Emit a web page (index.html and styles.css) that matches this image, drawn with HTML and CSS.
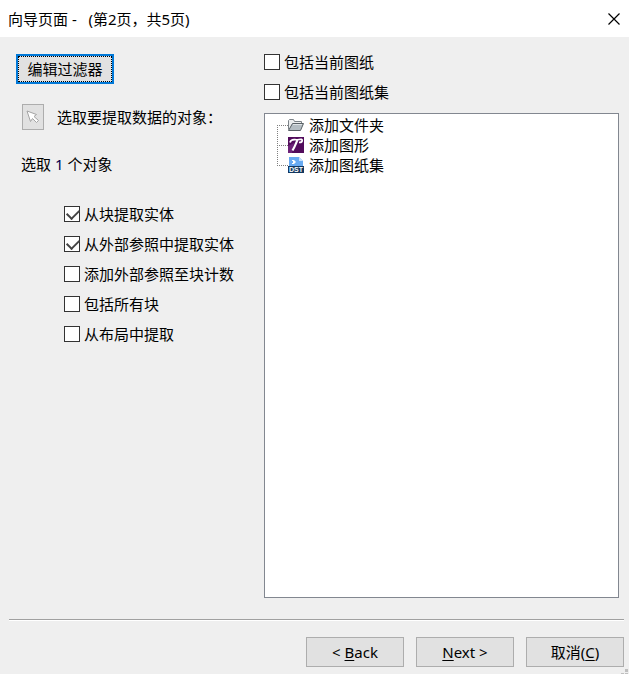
FILE: index.html
```html
<!DOCTYPE html>
<html lang="zh-CN">
<head>
    <meta charset="UTF-8">
    <meta name="viewport" content="width=device-width, initial-scale=1.0">
    <title>向导页面</title>
    <link rel="stylesheet" href="styles.css">
</head>
<body>
    <header class="titlebar">
        <h1>向导页面 -&nbsp;&nbsp; (第2页，共5页)</h1>
        <button class="close" type="button" aria-label="关闭">
            <svg width="12" height="12" viewBox="0 0 12 12"><path d="M0.5 0.5L11.5 11.5M11.5 0.5L0.5 11.5" stroke="#000" stroke-width="1.2" fill="none"/></svg>
        </button>
    </header>

    <main class="content">
        <section class="left">
            <button class="btn filter" type="button">编辑过滤器</button>
            <div class="pick">
                <button class="pick-btn" type="button" id="pick" aria-label="选取对象">
                    <svg width="14" height="14" viewBox="0 0 14 14"><path d="M1 1L10.5 4.5L8 6.5L12.5 10.5L10.5 12.5L6.5 8.5L4.5 11.5Z" fill="#fff" stroke="#a3a3a3"/></svg>
                </button>
                <label for="pick">选取要提取数据的对象：</label>
            </div>
            <p class="count">选取 <span class="number">1</span> 个对象</p>
            <div class="options">
                <label class="check"><input type="checkbox" checked>从块提取实体</label>
                <label class="check"><input type="checkbox" checked>从外部参照中提取实体</label>
                <label class="check"><input type="checkbox">添加外部参照至块计数</label>
                <label class="check"><input type="checkbox">包括所有块</label>
                <label class="check"><input type="checkbox">从布局中提取</label>
            </div>
        </section>

        <section class="right">
            <label class="check"><input type="checkbox">包括当前图纸</label>
            <label class="check"><input type="checkbox">包括当前图纸集</label>
            <ul class="tree">
                <li>
                    <svg width="16" height="16" viewBox="0 0 16 16">
                        <path d="M0.5 12.5V3.5L1.5 2.5H5.5L6.5 4.5H13.5V6.5" fill="#eceeef" stroke="#7c8388"/>
                        <path d="M0.5 13.5L4.5 6.5H15.5L12.5 13.5Z" fill="#b5bec4" stroke="#596166"/>
                        <path d="M5 7.5H14" stroke="#dfe4e7"/>
                    </svg>
                    添加文件夹
                </li>
                <li>
                    <svg width="16" height="16" viewBox="0 0 16 16">
                        <rect width="16" height="16" fill="#520c5c"/>
                        <path d="M0 9L6 6L4 16H0Z" fill="#6d2378"/>
                        <path d="M2 5.5C2.5 3 5 2.4 7.5 2.7C11 3 14.5 1.2 14.2 3.6C14 5 12.5 5.6 11 5.4" fill="none" stroke="#fff" stroke-width="1.7"/>
                        <path d="M9.5 3C8 6 7 9.5 4.5 13.5" fill="none" stroke="#fff" stroke-width="2.2"/>
                    </svg>
                    添加图形
                </li>
                <li>
                    <svg width="16" height="16" viewBox="0 0 16 16">
                        <path d="M1 0H11L15 4V10H1Z" fill="#68aaf2"/>
                        <path d="M11 0V4H15Z" fill="#c5e0fb"/>
                        <path d="M4 3H6L8 5L6 7H4V6H5V4H4Z" fill="#fff"/>
                        <rect y="9" width="16" height="7" fill="#12375f"/>
                        <text class="dst" x="8" y="15" text-anchor="middle">DST</text>
                    </svg>
                    添加图纸集
                </li>
            </ul>
        </section>
    </main>

    <footer class="footer">
        <button class="btn" type="button">&lt; <u>B</u>ack</button>
        <button class="btn" type="button"><u>N</u>ext &gt;</button>
        <button class="btn" type="button">取消(<u>C</u>)</button>
    </footer>
    <svg class="grip" width="8" height="5" viewBox="0 0 8 5"><path d="M4 0H7V3H4ZM0 4H3V5H0ZM4 4H7V5H4Z" fill="#bfbfbf"/></svg>
</body>
</html>
```

FILE: styles.css
```css
* {
    box-sizing: border-box;
}
body {
    display: flex;
    flex-direction: column;
    min-height: 100vh;
    margin: 0;
    position: relative;
    background-color: #efefef;
    color: #000;
    font-family: "Noto Sans", "Noto Sans CJK SC", sans-serif;
    font-size: 15px;
    line-height: 20px;
}
button {
    font: inherit;
    color: inherit;
}
.titlebar {
    display: flex;
    align-items: center;
    justify-content: space-between;
    height: 37px;
    padding: 0 9px 0 8px;
    background-color: #fff;
}
.titlebar h1 {
    margin: 0;
    font-size: 15px;
    font-weight: normal;
}
.close {
    display: flex;
    padding: 0;
    border: none;
    background: none;
}
.content {
    display: grid;
    grid-template-columns: 248px 1fr;
    flex: 1;
    padding: 17px 10px 21px 16px;
}
.btn {
    width: 98px;
    height: 30px;
    padding: 0;
    border: 1px solid #adadad;
    background-color: #e1e1e1;
}
.btn u {
    text-underline-offset: 2px;
}
.filter {
    border: 2px solid #0078d7;
    outline: 1px dotted #000;
    outline-offset: -3px;
}
.pick {
    display: flex;
    align-items: center;
    gap: 13px;
    margin: 20px 0 0 6px;
}
.pick-btn {
    display: flex;
    align-items: center;
    justify-content: center;
    width: 22px;
    height: 26px;
    padding: 0;
    border: 1px solid #adadad;
    background-color: #e1e1e1;
}
.count {
    margin: 24px 0 0 5px;
}
.number {
    color: #00004d;
}
.options {
    margin: 25px 0 0 48px;
}
.check {
    display: flex;
    align-items: center;
    gap: 4px;
    height: 30px;
}
.check input {
    appearance: none;
    width: 16px;
    height: 16px;
    margin: 0;
    border: 1px solid #333;
    background-color: #fff;
}
/* tick drawn from two borders of a turned box */
.check input:checked::before {
    content: "";
    display: block;
    width: 6px;
    height: 10px;
    margin: 0 0 0 4px;
    border: solid #444;
    border-width: 0 2px 2px 0;
    transform: rotate(45deg);
}
.right {
    display: flex;
    flex-direction: column;
    margin-top: -7px;
}
.tree {
    flex: 1;
    margin: 6px 0 0;
    padding: 1px 0 0 12px;
    border: 1px solid #828790;
    background-color: #fff;
    list-style: none;
}
.tree li {
    display: flex;
    align-items: center;
    gap: 5px;
    height: 20px;
    background: repeating-linear-gradient(to bottom, #808080 0 1px, transparent 1px 2px) 0 0 / 1px 100% no-repeat;
}
.tree li:first-child {
    background-position: 0 10px;
}
.tree li:last-child {
    background-size: 1px 10px;
}
.tree li::before {
    content: "";
    width: 11px;
    height: 1px;
    margin-right: -5px;
    background: repeating-linear-gradient(to right, #808080 0 1px, transparent 1px 2px);
}
.dst {
    font-family: "Liberation Sans", sans-serif;
    font-size: 7px;
    font-weight: bold;
    fill: #fff;
}
.footer {
    display: flex;
    justify-content: flex-end;
    gap: 12px;
    margin: 0 5px 0 9px;
    padding: 17px 0 7px;
    border-top: 1px solid #a0a0a0;
    box-shadow: inset 0 1px #fff;
}
.grip {
    position: absolute;
    right: 0;
    bottom: 0;
}
```
